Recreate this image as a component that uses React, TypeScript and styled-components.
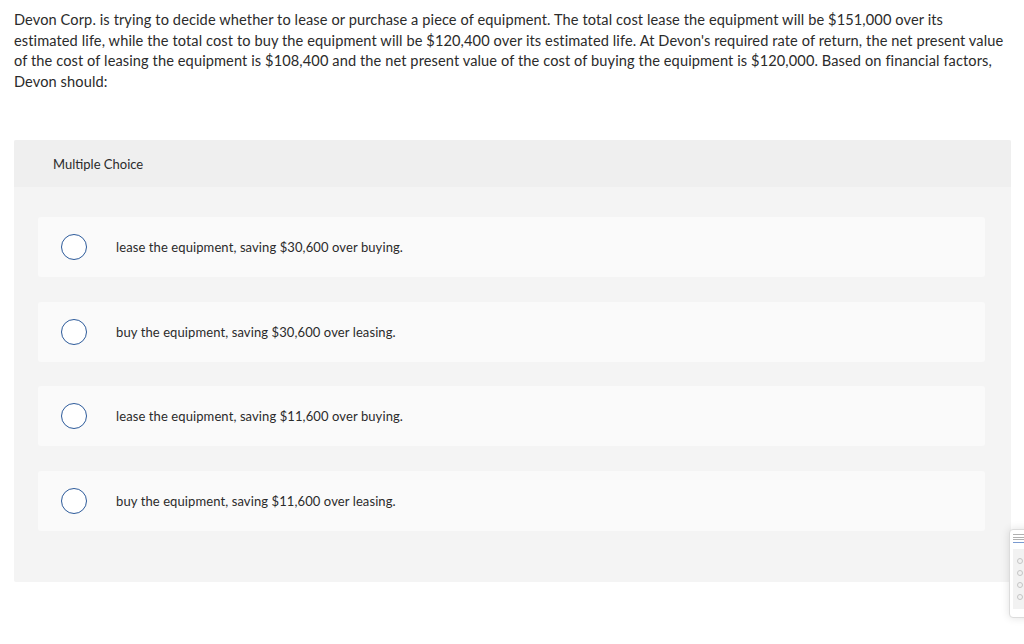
import React from 'react';
import styled, { createGlobalStyle } from 'styled-components';

const GlobalStyle = createGlobalStyle`
  html, body {
    margin: 0;
    padding: 0;
    background: #ffffff;
  }
  body {
    font-family: "Lato", "Open Sans", Arial, sans-serif;
    color: #2b2b2b;
  }
`;

const Page = styled.div`
  position: relative;
  width: 1024px;
  height: 644px;
  overflow: hidden;
  padding: 10px 13px 0 14px;
  box-sizing: border-box;
`;

const Question = styled.p`
  margin: 0;
  width: 992px;
  font-size: 14.6px;
  line-height: 20.5px;
  color: #2b2b2b;
  letter-spacing: 0.1px;
`;

const Panel = styled.section`
  margin-top: 48px;
  background: #f4f4f4;
  border-radius: 2px;
`;

const PanelHeader = styled.div`
  height: 47px;
  display: flex;
  align-items: center;
  padding-left: 39px;
  background: #efefef;
  font-size: 13px;
  color: #2b2b2b;
  border-radius: 2px 2px 0 0;
`;

const Choices = styled.div`
  display: flex;
  flex-direction: column;
  gap: 24.5px;
  padding: 30px 26px 51px 24px;
`;

const Choice = styled.label`
  height: 60px;
  display: flex;
  align-items: center;
  background: #fafafa;
  border-radius: 3px;
  padding-left: 23px;
  font-size: 13px;
  letter-spacing: 0.1px;
  color: #2b2b2b;
  cursor: pointer;
`;

const Radio = styled.span`
  width: 24px;
  height: 24px;
  border: 1.2px solid #2c5a9a;
  border-radius: 50%;
  background: #ffffff;
  flex-shrink: 0;
  margin-right: 29px;
`;

const Thumb = styled.div`
  position: absolute;
  left: 1009px;
  top: 529px;
  width: 60px;
  height: 89px;
  background: #ffffff;
  border: 1px solid #dcdcdc;
  border-radius: 4px;
  box-shadow: 0 0 8px rgba(0, 0, 0, 0.12);
  padding: 4px 3px;
  box-sizing: border-box;
`;

const ThumbLine = styled.div<{ $w: number; $c?: string }>`
  height: 1px;
  width: ${(p) => p.$w}px;
  background: ${(p) => p.$c || '#b0b0b0'};
  margin-bottom: 1.5px;
`;

const ThumbPanel = styled.div`
  margin-top: 6px;
  background: #f2f2f2;
  height: 60px;
  padding: 4px 2px;
  box-sizing: border-box;
`;

const ThumbDot = styled.div`
  width: 4px;
  height: 4px;
  border: 1px solid #c5c5c5;
  border-radius: 50%;
  margin: 5px 0 6px 2px;
`;

const choices = [
  'lease the equipment, saving $30,600 over buying.',
  'buy the equipment, saving $30,600 over leasing.',
  'lease the equipment, saving $11,600 over buying.',
  'buy the equipment, saving $11,600 over leasing.',
];

export default function App() {
  return (
    <>
      <GlobalStyle />
      <Page>
        <Question>
          Devon Corp. is trying to decide whether to lease or purchase a piece of equipment. The total cost lease the
          equipment will be $151,000 over its estimated life, while the total cost to buy the equipment will be $120,400
          over its estimated life. At Devon's required rate of return, the net present value of the cost of leasing the
          equipment is $108,400 and the net present value of the cost of buying the equipment is $120,000. Based on
          financial factors, Devon should:
        </Question>
        <Panel>
          <PanelHeader>Multiple Choice</PanelHeader>
          <Choices>
            {choices.map((c) => (
              <Choice key={c}>
                <Radio />
                {c}
              </Choice>
            ))}
          </Choices>
        </Panel>
        <Thumb>
          <ThumbLine $w={14} />
          <ThumbLine $w={14} />
          <ThumbLine $w={12} />
          <ThumbLine $w={14} $c="#7a9ad0" />
          <ThumbPanel>
            <ThumbDot />
            <ThumbDot />
            <ThumbDot />
            <ThumbDot />
          </ThumbPanel>
        </Thumb>
      </Page>
    </>
  );
}
